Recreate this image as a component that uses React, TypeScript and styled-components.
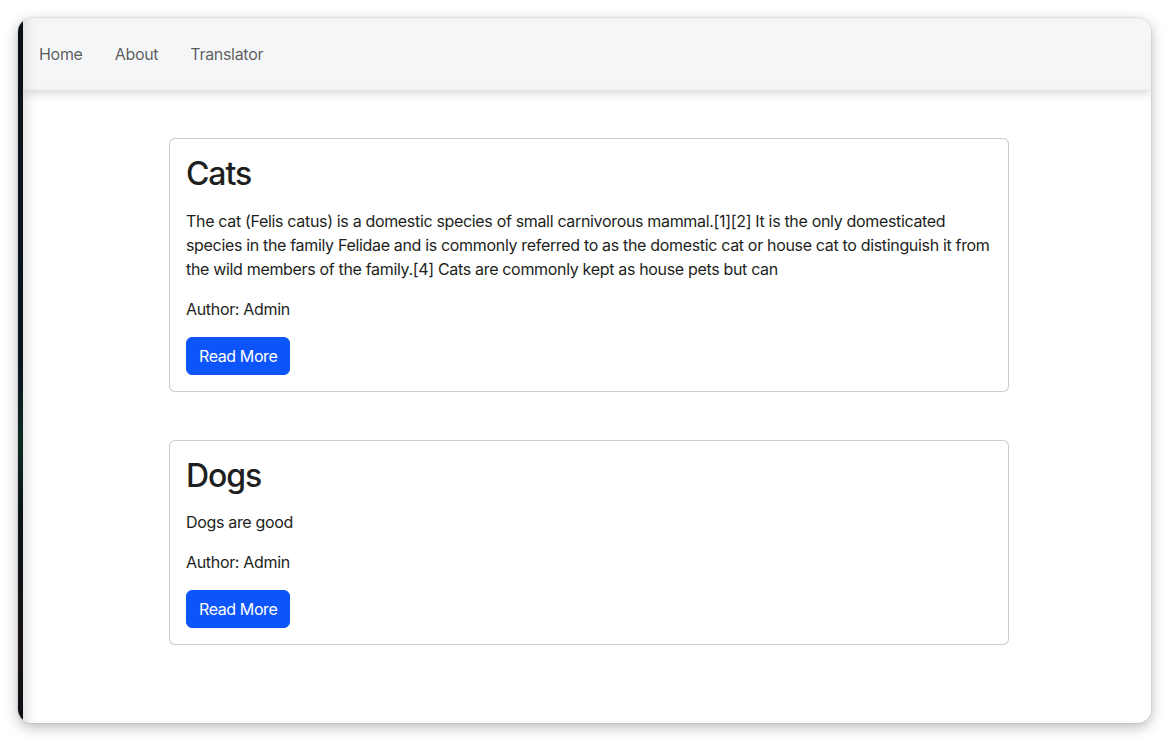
import React from "react";
import styled, { createGlobalStyle } from "styled-components";

const GlobalStyle = createGlobalStyle`
  html, body {
    margin: 0;
    padding: 0;
    background: #ffffff;
  }
  body {
    font-family: Inter, "Liberation Sans", Arial, sans-serif;
    color: #212529;
    -webkit-font-smoothing: antialiased;
  }
  * { box-sizing: border-box; }
`;

const Stage = styled.div`
  width: 1169px;
  height: 741px;
  padding: 18px;
  background: #ffffff;
`;

const Window = styled.div`
  display: flex;
  width: 1133px;
  height: 705px;
  border-radius: 14px;
  overflow: hidden;
  background: #ffffff;
  box-shadow: 0 4px 14px rgba(0, 0, 0, 0.28), 0 0 2px rgba(0, 0, 0, 0.2);
`;

const DesktopStrip = styled.div`
  flex: 0 0 5px;
  background: linear-gradient(
    180deg,
    #0b1118 0%,
    #0a1520 50%,
    #0c2a22 60%,
    #0a1418 70%,
    #1a1214 90%,
    #0b0f14 100%
  );
`;

const Page = styled.div`
  flex: 1;
  display: flex;
  flex-direction: column;
  background: #ffffff;
  box-shadow: inset 10px 0 14px -8px rgba(0, 0, 0, 0.16);
`;

const NavBar = styled.nav`
  position: relative;
  z-index: 1;
  flex: 0 0 72px;
  display: flex;
  align-items: center;
  background: #f5f6f8;
  box-shadow: 0 3px 10px rgba(0, 0, 0, 0.17), inset 10px 0 14px -8px rgba(0, 0, 0, 0.12);
`;

const NavLink = styled.a`
  padding: 8px 16px;
  font-size: 16px;
  line-height: 24px;
  letter-spacing: -0.3px;
  color: rgba(0, 0, 0, 0.65);
  text-decoration: none;
  cursor: pointer;
`;

const Content = styled.main`
  display: flex;
  flex-direction: column;
  gap: 48px;
  padding: 48px 0 0 146px;
`;

const Card = styled.article`
  width: 840px;
  border: 1px solid rgba(0, 0, 0, 0.2);
  border-radius: 6px;
  padding: 16px;
  background: #ffffff;
`;

const Title = styled.h2<{ $gap: number }>`
  margin: 0 0 ${(p) => p.$gap}px;
  font-size: 32px;
  font-weight: 500;
  line-height: 38.4px;
  letter-spacing: -1.1px;
  color: #1d1f21;
`;

const Text = styled.p`
  margin: 0 0 16px;
  font-size: 16px;
  line-height: 24px;
  letter-spacing: -0.33px;
  color: #1d1f21;
`;

const Button = styled.button`
  display: inline-block;
  padding: 6px 12px;
  font-family: inherit;
  font-size: 16px;
  line-height: 24px;
  letter-spacing: -0.4px;
  color: #ffffff;
  background: #0c55fb;
  border: 1px solid #0c55fb;
  border-radius: 6px;
  cursor: pointer;
`;

const posts = [
  {
    title: "Cats",
    body:
      "The cat (Felis catus) is a domestic species of small carnivorous mammal.[1][2] It is the only domesticated species in the family Felidae and is commonly referred to as the domestic cat or house cat to distinguish it from the wild members of the family.[4] Cats are commonly kept as house pets but can",
    author: "Admin",
    gap: 16,
  },
  { title: "Dogs", body: "Dogs are good", author: "Admin", gap: 14 },
];

export default function App() {
  return (
    <>
      <GlobalStyle />
      <Stage>
        <Window>
          <DesktopStrip />
          <Page>
            <NavBar>
              <NavLink>Home</NavLink>
              <NavLink>About</NavLink>
              <NavLink>Translator</NavLink>
            </NavBar>
            <Content>
              {posts.map((p) => (
                <Card key={p.title}>
                  <Title $gap={p.gap}>{p.title}</Title>
                  <Text>{p.body}</Text>
                  <Text>Author: {p.author}</Text>
                  <Button>Read More</Button>
                </Card>
              ))}
            </Content>
          </Page>
        </Window>
      </Stage>
    </>
  );
}
